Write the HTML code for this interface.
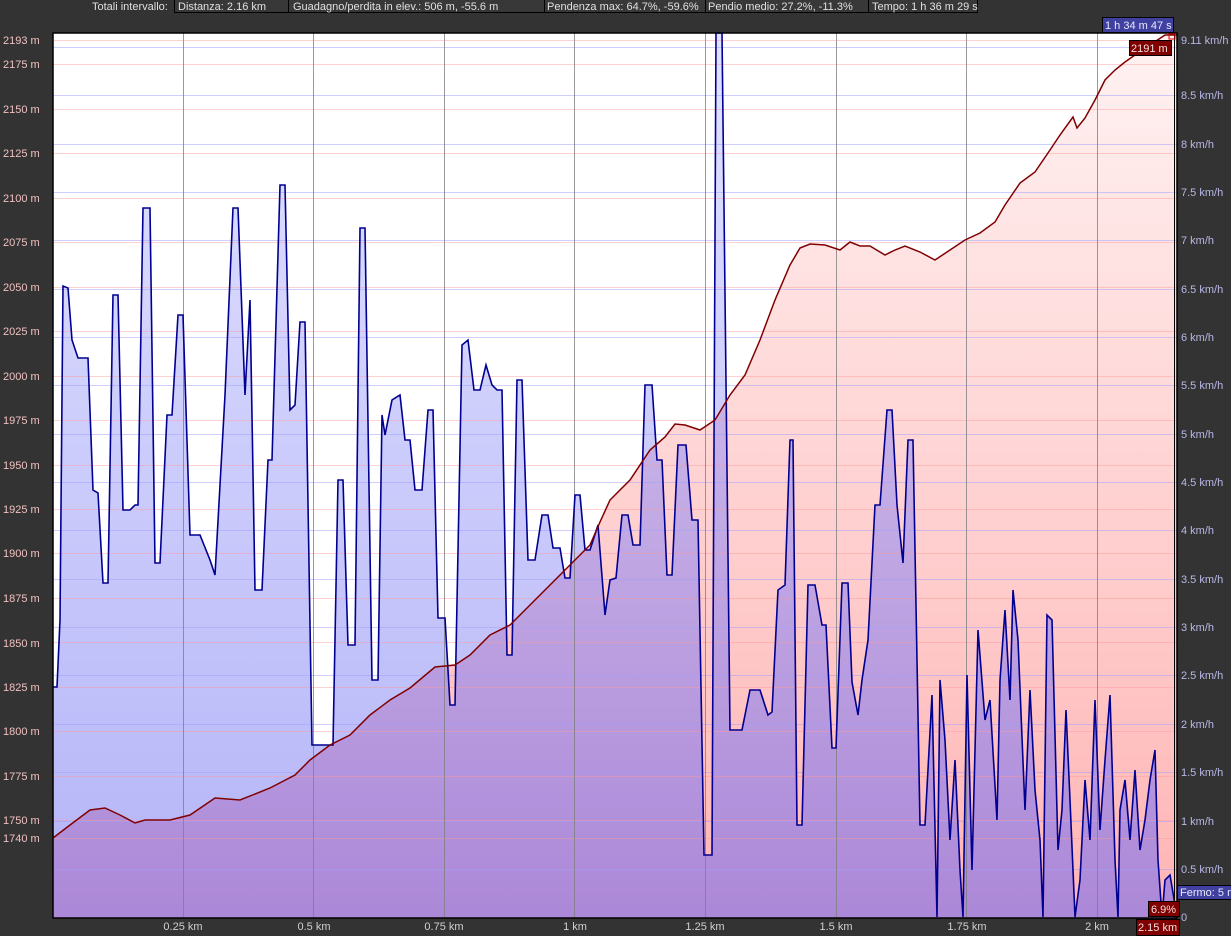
<!DOCTYPE html>
<html><head><meta charset="utf-8"><style>
html,body{margin:0;padding:0;background:#333;}
svg{display:block;font-family:"Liberation Sans",sans-serif;}
</style></head><body>
<svg width="1231" height="936" viewBox="0 0 1231 936" xmlns="http://www.w3.org/2000/svg">
<defs>
<linearGradient id="gp" x1="0" y1="33" x2="0" y2="918" gradientUnits="userSpaceOnUse"><stop offset="0" stop-color="#fff2f2"/><stop offset="1" stop-color="#ffb4b4"/></linearGradient>
<linearGradient id="gb" x1="0" y1="33" x2="0" y2="918" gradientUnits="userSpaceOnUse"><stop offset="0" stop-color="#e2e2ff"/><stop offset="1" stop-color="#b4b4f8"/></linearGradient>
<linearGradient id="gu" x1="0" y1="400" x2="0" y2="918" gradientUnits="userSpaceOnUse"><stop offset="0" stop-color="#c8b4e8"/><stop offset="1" stop-color="#ac88d8"/></linearGradient>
<polygon id="epoly" points="53,918 53,838 70,825 90,810 105,808 120,815 135,823 145,820 170,820 190,815 215,798 240,800 270,788 295,775 310,760 330,745 350,735 370,715 390,700 410,688 435,667 455,665 470,655 490,635 510,625 530,605 550,585 570,565 590,545 600,522 610,500 630,480 650,450 665,437 675,424 685,425 700,430 715,420 730,395 745,375 760,340 775,300 790,265 800,248 810,244 825,245 840,250 850,242 860,246 870,246 885,255 895,250 905,246 920,252 935,260 950,250 965,240 980,233 995,222 1005,205 1020,183 1035,172 1050,150 1060,135 1073,117 1077,128 1085,118 1095,100 1105,80 1115,70 1125,62 1135,55 1150,45 1165,35 1177,35 1177,918"/>
<polygon id="spoly" points="53,918 53,687 57,687 60,620 63,286 68,288 72,340 78,358 88,358 93,490 98,493 103,583 108,583 113,295 118,295 123,510 130,510 135,505 138,505 143,208 150,208 155,563 160,563 167,415 172,415 178,315 183,315 190,535 200,535 210,560 215,575 225,395 233,208 238,208 245,395 250,300 255,590 262,590 268,460 272,460 280,185 285,185 290,410 295,405 300,322 305,322 312,745 320,745 333,745 338,480 343,480 348,645 355,645 360,228 365,228 372,680 378,680 382,415 385,435 392,400 400,395 405,440 410,440 415,490 422,490 428,410 433,410 438,618 445,618 450,705 455,705 462,345 468,340 474,390 480,390 486,365 492,385 497,390 502,390 507,655 512,655 517,380 522,380 528,560 535,560 542,515 548,515 553,548 560,548 565,578 570,578 575,495 580,495 585,550 590,550 598,525 605,615 610,580 616,578 622,515 628,515 633,545 640,545 645,385 652,385 657,460 662,460 667,575 672,575 678,445 686,445 692,520 698,520 704,855 712,855 716,33 722,33 730,730 742,730 750,690 760,690 768,715 772,712 778,590 785,585 790,440 793,440 797,825 802,825 808,585 815,585 822,625 826,625 832,748 836,748 842,583 848,583 852,682 858,715 862,680 868,640 875,505 880,505 887,410 892,410 897,505 903,563 908,440 913,440 920,825 925,825 932,695 937,917 940,680 945,740 950,840 955,760 960,870 963,917 967,675 972,870 978,630 985,720 990,700 997,820 1000,680 1005,610 1010,700 1013,590 1018,640 1025,810 1030,690 1035,790 1040,840 1043,917 1047,615 1052,620 1058,850 1062,810 1066,710 1070,800 1075,917 1080,880 1085,780 1090,840 1095,700 1100,830 1105,760 1110,695 1115,860 1118,917 1120,810 1125,780 1130,840 1135,770 1140,850 1145,820 1150,780 1155,750 1158,860 1162,917 1165,880 1170,875 1177,917 1177,918"/>
<clipPath id="ce"><use href="#epoly"/></clipPath>
</defs>
<rect x="53" y="33" width="1124" height="885" fill="#fff"/>
<use href="#epoly" fill="url(#gp)"/>
<use href="#spoly" fill="url(#gb)"/>
<g clip-path="url(#ce)"><use href="#spoly" fill="url(#gu)"/></g>
<!-- grid -->
<g stroke-width="1">
<g stroke="#a0a0ff" opacity="0.5">
<line x1="53" x2="1177" y1="869.5" y2="869.5"/><line x1="53" x2="1177" y1="821.5" y2="821.5"/><line x1="53" x2="1177" y1="772.5" y2="772.5"/><line x1="53" x2="1177" y1="724.5" y2="724.5"/><line x1="53" x2="1177" y1="675.5" y2="675.5"/><line x1="53" x2="1177" y1="627.5" y2="627.5"/><line x1="53" x2="1177" y1="579.5" y2="579.5"/><line x1="53" x2="1177" y1="530.5" y2="530.5"/><line x1="53" x2="1177" y1="482.5" y2="482.5"/><line x1="53" x2="1177" y1="434.5" y2="434.5"/><line x1="53" x2="1177" y1="385.5" y2="385.5"/><line x1="53" x2="1177" y1="337.5" y2="337.5"/><line x1="53" x2="1177" y1="289.5" y2="289.5"/><line x1="53" x2="1177" y1="240.5" y2="240.5"/><line x1="53" x2="1177" y1="192.5" y2="192.5"/><line x1="53" x2="1177" y1="144.5" y2="144.5"/><line x1="53" x2="1177" y1="95.5" y2="95.5"/><line x1="53" x2="1177" y1="47.5" y2="47.5"/>
</g>
<g stroke="#ff9a9a" opacity="0.45">
<line x1="53" x2="1177" y1="838.5" y2="838.5"/><line x1="53" x2="1177" y1="820.5" y2="820.5"/><line x1="53" x2="1177" y1="776.5" y2="776.5"/><line x1="53" x2="1177" y1="731.5" y2="731.5"/><line x1="53" x2="1177" y1="687.5" y2="687.5"/><line x1="53" x2="1177" y1="642.5" y2="642.5"/><line x1="53" x2="1177" y1="598.5" y2="598.5"/><line x1="53" x2="1177" y1="553.5" y2="553.5"/><line x1="53" x2="1177" y1="509.5" y2="509.5"/><line x1="53" x2="1177" y1="465.5" y2="465.5"/><line x1="53" x2="1177" y1="420.5" y2="420.5"/><line x1="53" x2="1177" y1="376.5" y2="376.5"/><line x1="53" x2="1177" y1="331.5" y2="331.5"/><line x1="53" x2="1177" y1="287.5" y2="287.5"/><line x1="53" x2="1177" y1="242.5" y2="242.5"/><line x1="53" x2="1177" y1="198.5" y2="198.5"/><line x1="53" x2="1177" y1="153.5" y2="153.5"/><line x1="53" x2="1177" y1="109.5" y2="109.5"/><line x1="53" x2="1177" y1="64.5" y2="64.5"/><line x1="53" x2="1177" y1="40.5" y2="40.5"/>
</g>
<g stroke="#808080" opacity="0.8">
<line y1="33" y2="918" x1="183.5" x2="183.5"/><line y1="33" y2="918" x1="313.5" x2="313.5"/><line y1="33" y2="918" x1="444.5" x2="444.5"/><line y1="33" y2="918" x1="574.5" x2="574.5"/><line y1="33" y2="918" x1="705.5" x2="705.5"/><line y1="33" y2="918" x1="836.5" x2="836.5"/><line y1="33" y2="918" x1="966.5" x2="966.5"/><line y1="33" y2="918" x1="1097.5" x2="1097.5"/>
</g>
</g>
<polyline points="53,687 57,687 60,620 63,286 68,288 72,340 78,358 88,358 93,490 98,493 103,583 108,583 113,295 118,295 123,510 130,510 135,505 138,505 143,208 150,208 155,563 160,563 167,415 172,415 178,315 183,315 190,535 200,535 210,560 215,575 225,395 233,208 238,208 245,395 250,300 255,590 262,590 268,460 272,460 280,185 285,185 290,410 295,405 300,322 305,322 312,745 320,745 333,745 338,480 343,480 348,645 355,645 360,228 365,228 372,680 378,680 382,415 385,435 392,400 400,395 405,440 410,440 415,490 422,490 428,410 433,410 438,618 445,618 450,705 455,705 462,345 468,340 474,390 480,390 486,365 492,385 497,390 502,390 507,655 512,655 517,380 522,380 528,560 535,560 542,515 548,515 553,548 560,548 565,578 570,578 575,495 580,495 585,550 590,550 598,525 605,615 610,580 616,578 622,515 628,515 633,545 640,545 645,385 652,385 657,460 662,460 667,575 672,575 678,445 686,445 692,520 698,520 704,855 712,855 716,33 722,33 730,730 742,730 750,690 760,690 768,715 772,712 778,590 785,585 790,440 793,440 797,825 802,825 808,585 815,585 822,625 826,625 832,748 836,748 842,583 848,583 852,682 858,715 862,680 868,640 875,505 880,505 887,410 892,410 897,505 903,563 908,440 913,440 920,825 925,825 932,695 937,917 940,680 945,740 950,840 955,760 960,870 963,917 967,675 972,870 978,630 985,720 990,700 997,820 1000,680 1005,610 1010,700 1013,590 1018,640 1025,810 1030,690 1035,790 1040,840 1043,917 1047,615 1052,620 1058,850 1062,810 1066,710 1070,800 1075,917 1080,880 1085,780 1090,840 1095,700 1100,830 1105,760 1110,695 1115,860 1118,917 1120,810 1125,780 1130,840 1135,770 1140,850 1145,820 1150,780 1155,750 1158,860 1162,917 1165,880 1170,875 1177,917" fill="none" stroke="#000090" stroke-width="1.6"/>
<polyline points="53,838 70,825 90,810 105,808 120,815 135,823 145,820 170,820 190,815 215,798 240,800 270,788 295,775 310,760 330,745 350,735 370,715 390,700 410,688 435,667 455,665 470,655 490,635 510,625 530,605 550,585 570,565 590,545 600,522 610,500 630,480 650,450 665,437 675,424 685,425 700,430 715,420 730,395 745,375 760,340 775,300 790,265 800,248 810,244 825,245 840,250 850,242 860,246 870,246 885,255 895,250 905,246 920,252 935,260 950,250 965,240 980,233 995,222 1005,205 1020,183 1035,172 1050,150 1060,135 1073,117 1077,128 1085,118 1095,100 1105,80 1115,70 1125,62 1135,55 1150,45 1165,35 1177,35" fill="none" stroke="#800000" stroke-width="1.5"/>
<line x1="1174.5" x2="1174.5" y1="33" y2="918" stroke="#000"/>
<rect x="53" y="33" width="1124" height="885" fill="none" stroke="#000" stroke-width="1.5"/>
<rect x="1169" y="34" width="6" height="5" fill="none" stroke="#e00000"/>
<g fill="#f0c0c0" font-size="11">
<text x="3" y="44">2193 m</text><text x="3" y="68">2175 m</text><text x="3" y="113">2150 m</text><text x="3" y="157">2125 m</text><text x="3" y="202">2100 m</text><text x="3" y="246">2075 m</text><text x="3" y="291">2050 m</text><text x="3" y="335">2025 m</text><text x="3" y="380">2000 m</text><text x="3" y="424">1975 m</text><text x="3" y="469">1950 m</text><text x="3" y="513">1925 m</text><text x="3" y="557">1900 m</text><text x="3" y="602">1875 m</text><text x="3" y="647">1850 m</text><text x="3" y="691">1825 m</text><text x="3" y="735">1800 m</text><text x="3" y="780">1775 m</text><text x="3" y="824">1750 m</text><text x="3" y="842">1740 m</text>
</g>
<g fill="#b8b8e8" font-size="11">
<text x="1181" y="44">9.11 km/h</text><text x="1181" y="99">8.5 km/h</text><text x="1181" y="148">8 km/h</text><text x="1181" y="196">7.5 km/h</text><text x="1181" y="244">7 km/h</text><text x="1181" y="293">6.5 km/h</text><text x="1181" y="341">6 km/h</text><text x="1181" y="389">5.5 km/h</text><text x="1181" y="438">5 km/h</text><text x="1181" y="486">4.5 km/h</text><text x="1181" y="534">4 km/h</text><text x="1181" y="583">3.5 km/h</text><text x="1181" y="631">3 km/h</text><text x="1181" y="679">2.5 km/h</text><text x="1181" y="728">2 km/h</text><text x="1181" y="776">1.5 km/h</text><text x="1181" y="825">1 km/h</text><text x="1181" y="873">0.5 km/h</text><text x="1181" y="921">0</text>
</g>
<g fill="#d0d0d0" font-size="11" text-anchor="middle">
<text x="183" y="930">0.25 km</text><text x="314" y="930">0.5 km</text><text x="444" y="930">0.75 km</text><text x="575" y="930">1 km</text><text x="705" y="930">1.25 km</text><text x="836" y="930">1.5 km</text><text x="967" y="930">1.75 km</text><text x="1097" y="930">2 km</text>
</g>
<g font-size="11" fill="#e0e0e0">
<text x="92" y="10">Totali intervallo:</text>
<rect x="174.5" y="-1" width="114" height="13.5" fill="#383838" stroke="#000"/><text x="178" y="10">Distanza: 2.16 km</text>
<rect x="288.5" y="-1" width="256" height="13.5" fill="#383838" stroke="#000"/><text x="293" y="10">Guadagno/perdita in elev.: 506 m, -55.6 m</text>
<rect x="544.5" y="-1" width="161" height="13.5" fill="#383838" stroke="#000"/><text x="547" y="10">Pendenza max: 64.7%, -59.6%</text>
<rect x="705.5" y="-1" width="163" height="13.5" fill="#383838" stroke="#000"/><text x="708" y="10">Pendio medio: 27.2%, -11.3%</text>
<rect x="868.5" y="-1" width="109" height="13.5" fill="#383838" stroke="#000"/><text x="872" y="10">Tempo: 1 h 36 m 29 s</text>
</g>
<g font-size="11">
<rect x="1102.5" y="17.5" width="71" height="15" fill="#4040a0" stroke="#000"/><text x="1105" y="29" fill="#e8e8ff">1 h 34 m 47 s</text>
<rect x="1129.5" y="40.5" width="42" height="15" fill="#800000" stroke="#000"/><text x="1131" y="52" fill="#f0e0e0">2191 m</text>
<rect x="1177.5" y="885.5" width="60" height="14" fill="#4040a0" stroke="#000"/><text x="1180" y="896" fill="#e8e8ff">Fermo: 5 m</text>
<rect x="1148.5" y="901.5" width="31" height="15" fill="#800000" stroke="#000"/><text x="1151" y="913" fill="#f0e0e0">6.9%</text>
<rect x="1136.5" y="919.5" width="43" height="16" fill="#800000" stroke="#000"/><text x="1138" y="931" fill="#f0e0e0">2.15 km</text>
</g>
</svg>
</body></html>
